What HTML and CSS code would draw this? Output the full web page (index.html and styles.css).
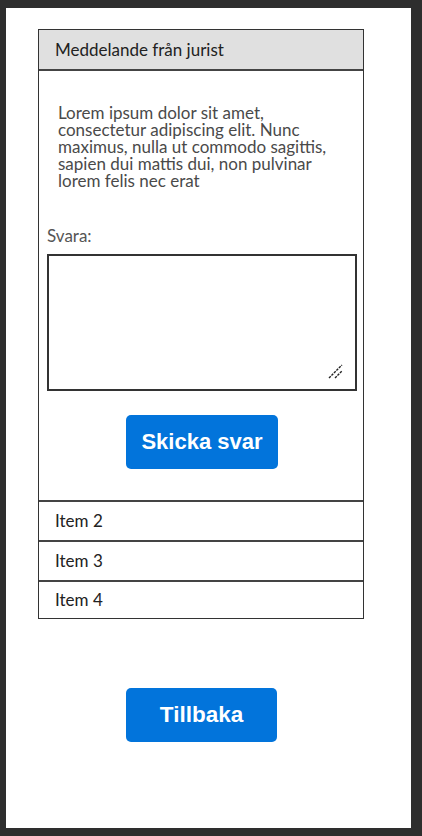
FILE: index.html
```html
<!DOCTYPE html>
<html lang="sv">
<head>
<meta charset="utf-8">
<title>Meddelande från jurist</title>
<link rel="stylesheet" href="styles.css">
</head>
<body>
<div class="screen">
  <div class="card">
    <div class="card-header">Meddelande från jurist</div>
    <div class="card-body">
      <p class="message">Lorem ipsum dolor sit amet, consectetur adipiscing elit. Nunc maximus, nulla ut commodo sagittis, sapien dui mattis dui, non pulvinar lorem felis nec erat</p>
      <label class="reply-label" for="reply">Svara:</label>
      <div class="reply-wrap">
        <textarea id="reply" class="reply"></textarea>
        <svg class="grip" width="16" height="16" viewBox="0 0 16 16" aria-hidden="true">
          <line x1="1" y1="15" x2="14" y2="2" stroke="#222" stroke-width="1.4" stroke-dasharray="2.5 1"/>
          <line x1="7" y1="15" x2="14" y2="8" stroke="#222" stroke-width="1.4" stroke-dasharray="2.5 1"/>
        </svg>
      </div>
      <div class="actions">
        <button class="btn">Skicka svar</button>
      </div>
    </div>
    <div class="item">Item 2</div>
    <div class="item">Item 3</div>
    <div class="item">Item 4</div>
  </div>
  <div class="back">
    <button class="btn">Tillbaka</button>
  </div>
</div>
</body>
</html>
```

FILE: styles.css
```css
html, body {
  margin: 0;
  padding: 0;
}
body {
  background: #2e2e2e;
  font-family: Lato, "Noto Sans", sans-serif;
  color: #333;
}
.screen {
  box-sizing: border-box;
  margin: 8px 0 0 6px;
  width: 405px;
  height: 820px;
  background: #fff;
  padding: 21px 0 0 32px;
}
.card {
  box-sizing: border-box;
  width: 326px;
  border: 1px solid #333;
}
.card-header {
  box-sizing: border-box;
  height: 41px;
  background: #e0e0e0;
  border-bottom: 2px solid #444;
  padding: 0 16px;
  font-size: 17px;
  line-height: 39px;
  color: #222;
}
.card-body {
  padding: 33px 0 0;
  height: 429px;
  box-sizing: border-box;
}
.message {
  margin: 0;
  padding: 0 19px;
  font-size: 17px;
  line-height: 17px;
  color: #4a4a4a;
}
.reply-label {
  display: block;
  margin: 38px 0 0 8px;
  font-size: 17px;
  line-height: 18px;
  color: #555;
}
.reply-wrap {
  position: relative;
  margin: 9px 0 0 8px;
  width: 310px;
  height: 137px;
}
.reply {
  display: block;
  box-sizing: border-box;
  width: 310px;
  height: 137px;
  border: 2px solid #333;
  border-radius: 0;
  padding: 4px;
  font-family: inherit;
  font-size: 16px;
  outline: none;
  resize: none;
}
.grip {
  position: absolute;
  right: 13px;
  bottom: 12px;
}
.actions {
  display: flex;
  justify-content: center;
  margin-top: 24px;
  padding-left: 2px;
}
.btn {
  box-sizing: border-box;
  width: 152px;
  height: 54px;
  border: none;
  border-radius: 5px;
  background: #0274db;
  color: #fff;
  font-family: "Liberation Sans", Arial, sans-serif;
  font-weight: bold;
  font-size: 22px;
  cursor: pointer;
}
.item {
  box-sizing: border-box;
  height: 40px;
  border-top: 2px solid #444;
  padding: 0 16px;
  font-size: 17px;
  line-height: 38px;
  color: #222;
}
.item:last-child {
  height: 38px;
  line-height: 36px;
}
.back {
  display: flex;
  padding: 69px 0 0 88px;
}
.back .btn {
  width: 151px;
  font-size: 22.5px;
}
```
